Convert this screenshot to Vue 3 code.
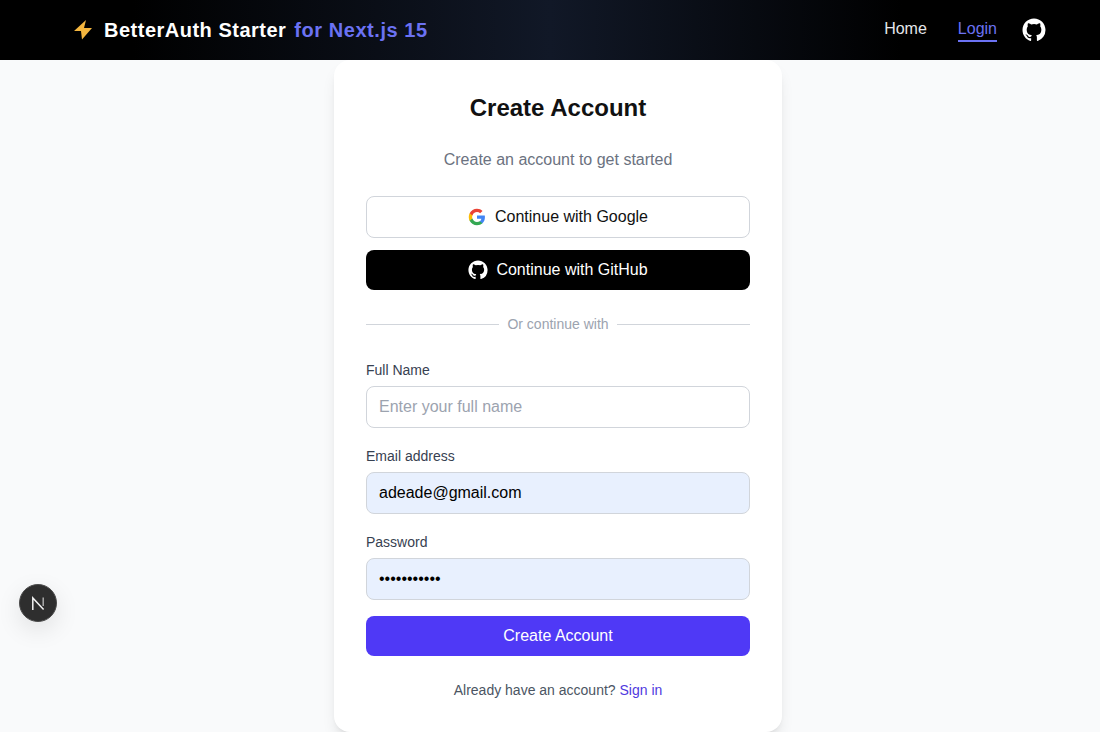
<template>
  <div class="page">
    <header class="topbar">
      <div class="brand">
        <svg class="bolt" viewBox="0 0 18 20" width="18" height="20">
          <path d="M12 0 L0 11 L7 11 L8 19.5 L18 8 L10 8 Z" fill="#f4b63f" />
        </svg>
        <span class="brand-name">BetterAuth Starter</span>
        <span class="brand-sub">for Next.js 15</span>
      </div>
      <nav class="nav">
        <a class="nav-link">Home</a>
        <a class="nav-link active">Login</a>
        <svg class="gh" viewBox="0 0 24 24" width="24" height="24" fill="#fff">
          <path :d="githubPath" />
        </svg>
      </nav>
    </header>

    <main class="main">
      <section class="card">
        <h1 class="title">Create Account</h1>
        <p class="subtitle">Create an account to get started</p>

        <button class="btn btn-google" type="button">
          <svg viewBox="0 0 24 24" width="18" height="18">
            <path fill="#4285F4" d="M22.56 12.25c0-.78-.07-1.53-.2-2.25H12v4.26h5.92c-.26 1.37-1.04 2.53-2.21 3.31v2.77h3.57c2.08-1.92 3.28-4.74 3.28-8.09z" />
            <path fill="#34A853" d="M12 23c2.97 0 5.46-.98 7.28-2.66l-3.57-2.77c-.98.66-2.23 1.06-3.71 1.06-2.86 0-5.29-1.93-6.16-4.53H2.18v2.84C3.99 20.53 7.7 23 12 23z" />
            <path fill="#FBBC05" d="M5.84 14.09c-.22-.66-.35-1.36-.35-2.09s.13-1.43.35-2.09V7.07H2.18C1.43 8.55 1 10.22 1 12s.43 3.45 1.18 4.93l3.66-2.84z" />
            <path fill="#EA4335" d="M12 5.38c1.62 0 3.06.56 4.21 1.64l3.15-3.15C17.45 2.09 14.97 1 12 1 7.7 1 3.99 3.47 2.18 7.07l3.66 2.84c.87-2.6 3.3-4.53 6.16-4.53z" />
          </svg>
          <span>Continue with Google</span>
        </button>

        <button class="btn btn-github" type="button">
          <svg viewBox="0 0 24 24" width="20" height="20" fill="#fff">
            <path :d="githubPath" />
          </svg>
          <span>Continue with GitHub</span>
        </button>

        <div class="divider"><span>Or continue with</span></div>

        <form class="form" @submit.prevent>
          <div v-for="f in fields" :key="f.label" class="field">
            <label class="label">{{ f.label }}</label>
            <input
              class="input"
              :class="{ filled: f.value }"
              :type="f.type"
              :placeholder="f.placeholder"
              :value="f.value"
            />
          </div>
          <button class="btn btn-submit" type="submit">Create Account</button>
        </form>

        <p class="foot">Already have an account? <a class="foot-link">Sign in</a></p>
      </section>
    </main>

    <div class="next-badge">
      <svg viewBox="0 0 16 16" width="16" height="16" fill="none">
        <path d="M2.8 15V3L13.6 14.6" stroke="#f2f2f2" stroke-width="1.5" />
        <path d="M13.2 2.5V11" stroke="#aaa" stroke-width="1.5" />
      </svg>
    </div>
  </div>
</template>

<script setup>
const githubPath =
  "M12 .5C5.65.5.5 5.65.5 12c0 5.08 3.29 9.39 7.86 10.91.58.1.79-.25.79-.56v-2.14c-3.2.7-3.87-1.36-3.87-1.36-.52-1.33-1.28-1.68-1.28-1.68-1.05-.72.08-.7.08-.7 1.16.08 1.77 1.19 1.77 1.19 1.03 1.76 2.7 1.25 3.36.96.1-.75.4-1.25.73-1.54-2.55-.29-5.24-1.28-5.24-5.69 0-1.26.45-2.28 1.18-3.09-.12-.29-.51-1.46.11-3.05 0 0 .96-.31 3.16 1.18a10.98 10.98 0 0 1 5.75 0c2.2-1.49 3.16-1.18 3.16-1.18.62 1.59.23 2.76.11 3.05.74.81 1.18 1.83 1.18 3.09 0 4.42-2.69 5.39-5.25 5.68.41.36.78 1.06.78 2.13v3.16c0 .31.21.67.8.56A11.5 11.5 0 0 0 23.5 12C23.5 5.65 18.35.5 12 .5z";

const fields = [
  { label: "Full Name", type: "text", placeholder: "Enter your full name", value: "" },
  { label: "Email address", type: "email", placeholder: "", value: "adeade@gmail.com" },
  { label: "Password", type: "password", placeholder: "", value: "adeade12345" },
];
</script>

<style>
body {
  background: #f9fafb;
}
</style>

<style scoped>
.page {
  font-family: "Liberation Sans", Arial, sans-serif;
  min-height: 732px;
  background: #f9fafb;
}

.topbar {
  height: 60px;
  display: flex;
  align-items: center;
  justify-content: space-between;
  padding: 0 54px 0 74px;
  background: linear-gradient(90deg, #000 12%, #111827 50%, #000 82%);
}

.brand {
  display: flex;
  align-items: center;
}

.bolt {
  margin-right: 12px;
}

.brand-name {
  font-size: 20px;
  font-weight: 700;
  color: #fff;
  letter-spacing: 0.5px;
}

.brand-sub {
  font-size: 20px;
  font-weight: 700;
  color: #6b72f3;
  letter-spacing: 0.55px;
  margin-left: 8px;
}

.nav {
  display: flex;
  align-items: center;
  gap: 31px;
}

.nav-link {
  font-size: 16px;
  line-height: 22px;
  padding-top: 1px;
  margin-bottom: 1px;
  color: #e5e7eb;
  border-bottom: 2px solid transparent;
}

.nav-link.active {
  color: #6b72f3;
  border-bottom-color: #6b72f3;
}

.gh {
  margin-left: -6px;
}

.main {
  display: flex;
  justify-content: center;
  padding-left: 16px;
}

.card {
  width: 384px;
  padding: 32px;
  background: #fff;
  border-radius: 16px;
  box-shadow: 0 10px 15px -3px rgba(0, 0, 0, 0.1), 0 4px 6px -4px rgba(0, 0, 0, 0.1);
}

.title {
  margin: 0 0 24px;
  font-size: 24px;
  line-height: 32px;
  font-weight: 700;
  text-align: center;
  color: #111;
}

.subtitle {
  margin: 0 0 24px;
  font-size: 16px;
  line-height: 24px;
  text-align: center;
  color: #6b7280;
}

.btn {
  width: 100%;
  display: flex;
  align-items: center;
  justify-content: center;
  gap: 8px;
  font-family: inherit;
  font-size: 16px;
  border-radius: 8px;
  cursor: pointer;
}

.btn-google {
  height: 42px;
  gap: 9px;
  background: #fff;
  border: 1px solid #d1d5db;
  color: #111;
  margin-bottom: 12px;
}

.btn-github {
  height: 40px;
  background: #000;
  border: none;
  color: #fff;
}

.divider {
  display: flex;
  align-items: center;
  gap: 8px;
  margin: 24px 0 26px;
  font-size: 14px;
  line-height: 20px;
  color: #9ca3af;
}

.divider::before,
.divider::after {
  content: "";
  flex: 1;
  height: 1px;
  background: #d1d5db;
}

.form {
  display: flex;
  flex-direction: column;
}

.field {
  margin-bottom: 18px;
}

.label {
  display: block;
  margin-bottom: 6px;
  font-size: 14px;
  line-height: 20px;
  color: #374151;
}

.input {
  display: block;
  box-sizing: border-box;
  width: 100%;
  height: 42px;
  padding: 0 12px;
  font-family: inherit;
  font-size: 16px;
  color: #000;
  background: #fff;
  border: 1px solid #d1d5db;
  border-radius: 8px;
  outline: none;
}

.input::placeholder {
  color: #9ca3af;
}

.input.filled {
  background: #e8f0fe;
}

.btn-submit {
  height: 40px;
  margin-top: -2px;
  background: #4f39f6;
  border: none;
  color: #fff;
}

.foot {
  margin: 24px 0 0;
  font-size: 14px;
  line-height: 20px;
  text-align: center;
  color: #4b5563;
}

.foot-link {
  color: #4f39e0;
}

/* dev tools badge sits over the page */
.next-badge {
  position: fixed;
  left: 19px;
  top: 584px;
  width: 38px;
  height: 38px;
  box-sizing: border-box;
  display: flex;
  align-items: center;
  justify-content: center;
  background: #2e2e2e;
  border: 1.5px solid #4a4a4a;
  border-radius: 50%;
  box-shadow: 0 8px 24px rgba(0, 0, 0, 0.1);
}
</style>
